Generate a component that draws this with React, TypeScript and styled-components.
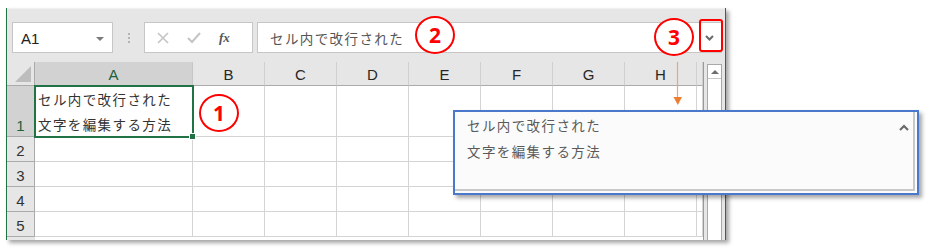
import React from "react";
import styled, { createGlobalStyle } from "styled-components";

const GlobalStyle = createGlobalStyle`
  body {
    margin: 0;
    background: #ffffff;
  }
`;

const GREEN = "#217346";
const RED = "#ff0000";
const COLS = ["A", "B", "C", "D", "E", "F", "G", "H", ""];
const ROWS = [1, 2, 3, 4, 5];
const LINE1 = "セル内で改行された";
const LINE2 = "文字を編集する方法";

const Stage = styled.div`
  position: relative;
  width: 928px;
  height: 249px;
  padding: 8px 0 0 6px;
  box-sizing: border-box;
  font-family: "Liberation Sans", "Noto Sans CJK JP", sans-serif;
`;

const Window = styled.div`
  width: 720px;
  height: 232px;
  box-sizing: border-box;
  border-left: 1px solid ${GREEN};
  border-right: 1px solid ${GREEN};
  background: #e6e6e6;
  box-shadow: 3px 3px 4px rgba(0, 0, 0, 0.35);
  display: flex;
  flex-direction: column;
`;

const FormulaRow = styled.div`
  height: 54px;
  box-sizing: border-box;
  padding: 13px 0 0 5px;
  border-top: 1px solid #f0f0f0;
  display: flex;
  align-items: flex-start;
`;

const NameBox = styled.div`
  width: 101px;
  height: 31px;
  box-sizing: border-box;
  background: #fff;
  border: 1px solid #c6c6c6;
  display: flex;
  align-items: center;
  justify-content: space-between;
  padding: 2px 8px 0 8px;
  font-size: 15px;
  color: #222;
`;

const SmallTri = styled.span`
  width: 0;
  height: 0;
  border-left: 4px solid transparent;
  border-right: 4px solid transparent;
  border-top: 4px solid #7a7a7a;
`;

const Dots = styled.div`
  width: 31px;
  height: 31px;
  display: flex;
  flex-direction: column;
  align-items: center;
  justify-content: center;
  gap: 2px;
  span {
    width: 2px;
    height: 2px;
    background: #b4b4b4;
  }
`;

const FxBox = styled.div`
  width: 109px;
  height: 31px;
  box-sizing: border-box;
  background: #fff;
  border: 1px solid #c6c6c6;
  display: flex;
  align-items: center;
  padding-left: 12px;
  gap: 18px;
`;

const FxText = styled.span`
  font-family: "Liberation Serif", serif;
  font-style: italic;
  font-weight: bold;
  font-size: 13px;
  color: #555;
`;

const FormulaInput = styled.div`
  margin-left: 4px;
  width: 465px;
  height: 31px;
  box-sizing: border-box;
  background: #fff;
  border: 1px solid #c6c6c6;
  display: flex;
  align-items: center;
  justify-content: space-between;
  padding: 0 7px 0 12px;
  font-family: "Noto Sans CJK JP", sans-serif;
  font-size: 13.5px;
  color: #555;
  letter-spacing: 1.4px;
`;

const Body = styled.div`
  display: flex;
  height: 178px;
`;

const Grid = styled.div`
  display: grid;
  grid-template-columns: 28px 158px repeat(7, 72px) 6px;
  grid-template-rows: 24px 51px repeat(4, 25px) 3px;
  background: #fff;
  align-self: flex-start;
`;

const Corner = styled.div`
  background: #e6e6e6;
  border-right: 1px solid #ababab;
  border-bottom: 1px solid #ababab;
  position: relative;
  &::after {
    content: "";
    position: absolute;
    right: 3px;
    bottom: 3px;
    border-left: 16px solid transparent;
    border-bottom: 16px solid #bdbdbd;
  }
`;

const ColHead = styled.div<{ $active?: boolean }>`
  background: ${(p) => (p.$active ? "#d2d2d2" : "#e6e6e6")};
  border-right: 1px solid ${(p) => (p.$active ? "#c6c6c6" : "#d0d0d0")};
  border-bottom: 1px solid #ababab;
  display: flex;
  align-items: center;
  justify-content: center;
  font-size: 15px;
  color: ${(p) => (p.$active ? "#1e5f3c" : "#262626")};
  padding-top: 1px;
`;

const RowHead = styled.div<{ $active?: boolean }>`
  background: ${(p) => (p.$active ? "#d2d2d2" : "#e6e6e6")};
  border-right: 1px solid #ababab;
  border-bottom: 1px solid #ababab;
  display: flex;
  align-items: flex-end;
  justify-content: center;
  padding-bottom: 2px;
  font-size: 15px;
  color: ${(p) => (p.$active ? "#1e5f3c" : "#333")};
`;

const Cell = styled.div`
  border-right: 1px solid #d4d4d4;
  border-bottom: 1px solid #d4d4d4;
`;

const Filler = styled.div`
  background: #e6e6e6;
`;

const ActiveCell = styled.div`
  position: relative;
  border: 2px solid ${GREEN};
  margin: -1px -1px -1px -1px;
  padding: 0 0 0 2px;
  font-family: "Noto Sans CJK JP", sans-serif;
  font-size: 13.5px;
  line-height: 25px;
  color: #333;
  letter-spacing: 1.4px;
  white-space: nowrap;
  z-index: 1;
  &::after {
    content: "";
    position: absolute;
    right: -4px;
    bottom: -4px;
    width: 5px;
    height: 5px;
    background: ${GREEN};
    border: 1px solid #fff;
  }
`;

const ScrollArea = styled.div`
  width: 22px;
  border-left: 1px solid #9a9a9a;
  display: flex;
  padding: 2px 0 0 3px;
  box-sizing: border-box;
`;

const ScrollTrack = styled.div`
  width: 15px;
  height: 176px;
  box-sizing: border-box;
  background: #fff;
  border: 1px solid #a8a8a8;
  border-bottom: none;
`;

const ScrollBtn = styled.div`
  height: 13px;
  border-bottom: 1px solid #c8c8c8;
  display: flex;
  align-items: center;
  justify-content: center;
  &::before {
    content: "";
    border-left: 4px solid transparent;
    border-right: 4px solid transparent;
    border-bottom: 4px solid #6e6e6e;
  }
`;

const Popup = styled.div`
  position: absolute;
  left: 453px;
  top: 110px;
  width: 466px;
  height: 85px;
  box-sizing: border-box;
  border: 2px solid #4a78cc;
  background: #fbfbfb;
  box-shadow: 3px 3px 4px rgba(0, 0, 0, 0.35);
  padding: 0 0 0 12px;
  font-family: "Noto Sans CJK JP", sans-serif;
  font-size: 13.5px;
  line-height: 26px;
  letter-spacing: 1.4px;
  color: #5a5a5a;
  &::before {
    content: "";
    position: absolute;
    inset: 0 2px 2px 0;
    border-right: 2px solid #c8c8c8;
    border-bottom: 2px solid #c8c8c8;
    pointer-events: none;
  }
`;

const CaretUp = styled.svg`
  position: absolute;
  right: 8px;
  top: 12px;
`;

const Marker = styled.div<{ $x: number; $y: number }>`
  position: absolute;
  left: ${(p) => p.$x}px;
  top: ${(p) => p.$y}px;
  width: 40px;
  height: 38px;
  box-sizing: border-box;
  border: 2.5px solid ${RED};
  border-radius: 50%;
  background: #fff;
  display: flex;
  align-items: center;
  justify-content: center;
  color: ${RED};
  font-family: "Noto Sans", sans-serif;
  font-weight: bold;
  font-size: 21px;
  line-height: 1;
`;

const RedBox = styled.div`
  position: absolute;
  left: 699px;
  top: 19px;
  width: 24px;
  height: 33px;
  box-sizing: border-box;
  border: 2.5px solid ${RED};
  border-radius: 3px;
`;

const Arrow = styled.svg`
  position: absolute;
  left: 672px;
  top: 62px;
`;

const Chevron = ({ up }: { up?: boolean }) => (
  <svg width="9" height="6" viewBox="0 0 9 6">
    <path
      d={up ? "M1 5 L4.5 1.5 L8 5" : "M1 1 L4.5 4.5 L8 1"}
      fill="none"
      stroke="#6a6a6a"
      strokeWidth="2"
    />
  </svg>
);

export default function App() {
  return (
    <Stage>
      <GlobalStyle />
      <Window>
        <FormulaRow>
          <NameBox>
            <span>A1</span>
            <SmallTri />
          </NameBox>
          <Dots>
            <span />
            <span />
            <span />
          </Dots>
          <FxBox>
            <svg width="12" height="12" viewBox="0 0 12 12">
              <path d="M1 1 L11 11 M11 1 L1 11" stroke="#c4c4c4" strokeWidth="1.6" />
            </svg>
            <svg width="14" height="12" viewBox="0 0 14 12">
              <path d="M1 6 L5 10 L13 1" fill="none" stroke="#c4c4c4" strokeWidth="2" />
            </svg>
            <FxText>fx</FxText>
          </FxBox>
          <FormulaInput>
            <span>{LINE1}</span>
            <Chevron />
          </FormulaInput>
        </FormulaRow>
        <Body>
          <Grid>
            <Corner />
            {COLS.map((c, i) => (
              <ColHead key={i} $active={c === "A"}>
                {c}
              </ColHead>
            ))}
            {ROWS.map((r) => (
              <React.Fragment key={r}>
                <RowHead $active={r === 1}>{r}</RowHead>
                {COLS.map((c, i) =>
                  r === 1 && c === "A" ? (
                    <ActiveCell key={i}>
                      {LINE1}
                      <br />
                      {LINE2}
                    </ActiveCell>
                  ) : (
                    <Cell key={i} />
                  )
                )}
              </React.Fragment>
            ))}
            <Filler />
          </Grid>
          <ScrollArea>
            <ScrollTrack>
              <ScrollBtn />
            </ScrollTrack>
          </ScrollArea>
        </Body>
      </Window>

      <Arrow width="12" height="44" viewBox="0 0 12 44">
        <path d="M5.5 0 V36" stroke="#f4a46a" strokeWidth="1.2" />
        <path d="M1.5 35 L10 35 L5.8 43 Z" fill="#ed7d31" />
      </Arrow>

      <Popup>
        {LINE1}
        <br />
        {LINE2}
        <CaretUp width="10" height="7" viewBox="0 0 10 7">
          <path d="M1 6 L5 2 L9 6" fill="none" stroke="#6a6a6a" strokeWidth="2.2" />
        </CaretUp>
      </Popup>

      <Marker $x={199} $y={94}>1</Marker>
      <Marker $x={415} $y={16}>2</Marker>
      <Marker $x={654} $y={18}>3</Marker>
      <RedBox />
    </Stage>
  );
}
